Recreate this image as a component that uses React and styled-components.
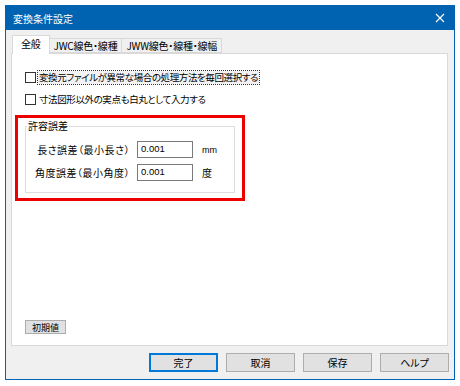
import React from "react";
import styled, { createGlobalStyle } from "styled-components";

const Global = createGlobalStyle`
  html, body { margin: 0; padding: 0; background: #ffffff; }
  body {
    font-family: "Noto Sans CJK JP", "Noto Sans", sans-serif;
    font-feature-settings: "palt";
    font-size: 10px;
    color: #000;
  }
`;

const Window = styled.div`
  margin: 5px;
  width: 450px;
  height: 375px;
  box-sizing: border-box;
  border: 1px solid #0063b1;
  background: #f0f0f0;
  display: flex;
  flex-direction: column;
`;

const TitleBar = styled.div`
  height: 24px;
  background: #0063b1;
  color: #fff;
  display: flex;
  align-items: center;
  justify-content: space-between;
  padding: 0 9px 0 7px;
  font-size: 10px;
`;

const Client = styled.div`
  flex: 1;
  display: flex;
  flex-direction: column;
  padding: 6px 6px 7px 5px;
  min-height: 0;
`;

const TabRow = styled.div`
  display: flex;
  align-items: flex-end;
  height: 17px;
  padding-left: 1px;
  position: relative;
  z-index: 1;
`;

const Tab = styled.div`
  box-sizing: border-box;
  height: ${(p) => (p.$active ? "19px" : "15px")};
  margin-bottom: ${(p) => (p.$active ? "-1px" : "0")};
  padding: 0 ${(p) => (p.$active ? "8px" : "4px")};
  border: 1px solid #d9d9d9;
  border-bottom: ${(p) => (p.$active ? "none" : "1px solid #d9d9d9")};
  border-left: ${(p) => (p.$first || p.$active ? "1px solid #d9d9d9" : "none")};
  background: ${(p) => (p.$active ? "#fff" : "#f0f0f0")};
  display: flex;
  align-items: ${(p) => (p.$active ? "flex-start" : "center")};
  padding-top: ${(p) => (p.$active ? "2px" : "0")};
  font-size: 10px;
  line-height: 12px;
  letter-spacing: -0.2px;
  white-space: nowrap;
`;

const Panel = styled.div`
  flex: 1;
  background: #fff;
  border: 1px solid #d9d9d9;
  display: flex;
  flex-direction: column;
  padding: 15px 0 11px 0;
  min-height: 0;
`;

const CheckRow = styled.label`
  display: flex;
  align-items: center;
  height: 16px;
  margin-left: 13px;
  margin-bottom: 6px;
  gap: 2px;
`;

const Box = styled.span`
  width: 9px;
  height: 9px;
  border: 1px solid #333;
  background: #fff;
  flex: none;
`;

const CheckText = styled.span`
  font-size: 9.5px;
  letter-spacing: -0.4px;
  line-height: 13px;
  padding: 0 1px;
  outline: ${(p) => (p.$focus ? "1px dotted #333" : "none")};
  background: ${(p) => (p.$focus ? "#f2f2f2" : "transparent")};
`;

const Highlight = styled.div`
  margin: 2px 0 0 3px;
  width: 230px;
  box-sizing: border-box;
  border: 3px solid #ee0000;
  padding: 2px 7px 5px 7px;
`;

const Group = styled.fieldset`
  margin: 0;
  padding: 0 0 11px 0;
  border: 1px solid #dcdcdc;
  min-width: 0;
`;

const Legend = styled.legend`
  margin-left: 1px;
  padding: 0 1px;
  font-size: 10px;
  line-height: 12px;
`;

const FieldGrid = styled.div`
  display: grid;
  grid-template-columns: 104px 56px auto;
  column-gap: 7px;
  row-gap: 6px;
  margin-top: 9px;
  align-items: center;
`;

const FieldLabel = styled.span`
  text-align: right;
  white-space: nowrap;
  letter-spacing: 0.5px;
`;

const Input = styled.div`
  box-sizing: border-box;
  height: 17px;
  border: 1px solid #7a7a7a;
  background: #fff;
  padding: 0 3px;
  line-height: 13px;
  font-family: "Liberation Sans", "Noto Sans", sans-serif;
  font-size: 9.5px;
`;

const Unit = styled.span`
  margin-left: 2px;
  font-size: ${(p) => (p.$latin ? "9px" : "10px")};
  font-family: ${(p) =>
    p.$latin ? '"Liberation Sans", sans-serif' : '"Noto Sans CJK JP", sans-serif'};
`;

const SmallButton = styled.div`
  margin-top: auto;
  margin-left: 13px;
  align-self: flex-start;
  box-sizing: border-box;
  height: 14px;
  width: 41px;
  background: #e1e1e1;
  border: 1px solid #adadad;
  display: flex;
  align-items: center;
  justify-content: center;
  font-size: 9px;
`;

const ButtonRow = styled.div`
  display: flex;
  justify-content: flex-end;
  gap: 8px;
  margin-top: 7px;
  margin-right: -1px;
`;

const Button = styled.div`
  box-sizing: border-box;
  width: 69px;
  height: 19px;
  background: #e1e1e1;
  border: ${(p) => (p.$default ? "2px solid #0078d7" : "1px solid #adadad")};
  display: flex;
  align-items: center;
  justify-content: center;
  font-size: 10px;
`;

const Close = () => (
  <svg width="10" height="10" viewBox="0 0 10 10">
    <path d="M1 1 L9 9 M9 1 L1 9" stroke="#fff" strokeWidth="1.2" fill="none" />
  </svg>
);

export default function App() {
  return (
    <>
      <Global />
      <Window>
        <TitleBar>
          <span>変換条件設定</span>
          <Close />
        </TitleBar>
        <Client>
          <TabRow>
            <Tab $active $first>全般</Tab>
            <Tab>JWC線色・線種</Tab>
            <Tab>JWW線色・線種・線幅</Tab>
          </TabRow>
          <Panel>
            <CheckRow>
              <Box />
              <CheckText $focus>変換元ファイルが異常な場合の処理方法を毎回選択する</CheckText>
            </CheckRow>
            <CheckRow>
              <Box />
              <CheckText>寸法図形以外の実点も白丸として入力する</CheckText>
            </CheckRow>
            <Highlight>
              <Group>
                <Legend>許容誤差</Legend>
                <FieldGrid>
                  <FieldLabel>長さ誤差（最小長さ）</FieldLabel>
                  <Input>0.001</Input>
                  <Unit $latin>mm</Unit>
                  <FieldLabel>角度誤差（最小角度）</FieldLabel>
                  <Input>0.001</Input>
                  <Unit>度</Unit>
                </FieldGrid>
              </Group>
            </Highlight>
            <SmallButton>初期値</SmallButton>
          </Panel>
          <ButtonRow>
            <Button $default>完了</Button>
            <Button>取消</Button>
            <Button>保存</Button>
            <Button>ヘルプ</Button>
          </ButtonRow>
        </Client>
      </Window>
    </>
  );
}
